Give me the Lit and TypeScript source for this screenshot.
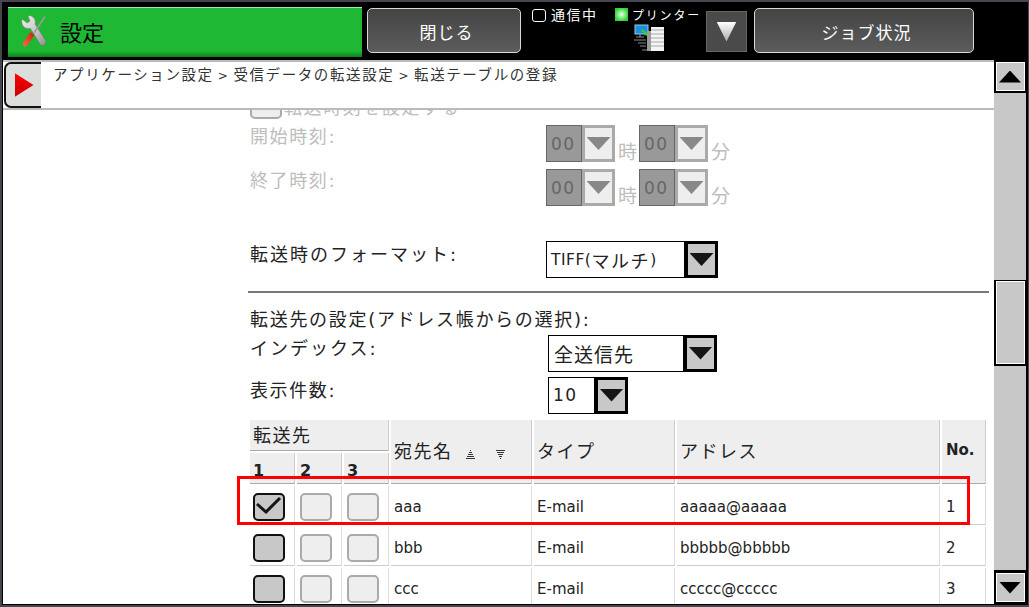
import { LitElement, html, css, svg } from "lit";
import { customElement } from "lit/decorators.js";

const rows = [
  { on: true, name: "aaa", addr: "aaaaa@aaaaa", no: "1" },
  { on: false, name: "bbb", addr: "bbbbb@bbbbb", no: "2" },
  { on: false, name: "ccc", addr: "ccccc@ccccc", no: "3" },
];

const tools = svg`<svg class="tools" width="28" height="34" viewBox="0 0 28 34">
  <defs>
    <linearGradient id="metal" x1="0" y1="0" x2="1" y2="1"><stop offset="0" stop-color="#f2f2f2"/><stop offset="0.6" stop-color="#c4c4c4"/><stop offset="1" stop-color="#8f8f8f"/></linearGradient>
    <linearGradient id="redh" x1="0" y1="1" x2="1" y2="0"><stop offset="0" stop-color="#ff6a4a"/><stop offset="1" stop-color="#c81c10"/></linearGradient>
  </defs>
  <path d="M2 5 L7 9 L10 7 L8 2 C11 1 14 3 15 6 C15.600 8 15.400 9 15 10 L24.500 25 C26 27 26 29 24.500 30.500 C23 31.500 21 31.500 20 30 L10.500 14.500 C7 15 4 14 2.500 11 C1.800 9 1.600 7 2 5 Z" fill="url(#metal)" stroke="#777" stroke-width="0.5"/>
  <path d="M25 2.500 L14 19" stroke="#9a9a9a" stroke-width="1.600" fill="none"/>
  <path d="M10.500 18 L14.500 21 L7.500 31 C6.500 32.500 5 33 3.800 32 C2.800 31 2.800 29.500 3.500 28 Z" fill="url(#redh)"/>
</svg>`;

const printer = svg`<svg width="34" height="27" viewBox="0 0 34 27">
  <rect x="3" y="1" width="13" height="9" fill="#1d8fe0" stroke="#9bc8ea" stroke-width="1"/>
  <path d="M4 13 H12 M8 10 V13 M2 16 H14 M6 19 H14 M8 22 H14 M10 26 H16" stroke="#8a8a8a" stroke-width="1.200" fill="none"/>
  <path d="M10 5 L16 9 L17 5 L17 12 L11 11 L14 10 L9 7 Z" fill="#2fd03a"/>
  <rect x="15" y="7" width="5" height="20" fill="#9a9a9a"/>
  <rect x="19" y="3" width="13" height="24" fill="#f4f4f4"/>
  <path d="M19 6 H32 M19 10 H32 M19 14 H32 M19 18 H32 M19 22 H32" stroke="#a8a8a8" stroke-width="1"/>
</svg>`;

const sortUp = svg`<svg width="9" height="9" viewBox="0 0 9 9" shape-rendering="crispEdges"><path d="M4 0.500 H5 M3 2.500 H6 M2 4.500 H7 M1 6.500 H8 M0 8.500 H9" stroke="#333" stroke-width="1"/></svg>`;
const sortDown = svg`<svg width="9" height="9" viewBox="0 0 9 9" shape-rendering="crispEdges"><path d="M0 0.500 H9 M1 2.500 H8 M2 4.500 H7 M3 6.500 H6 M4 8.500 H5" stroke="#333" stroke-width="1"/></svg>`;

@customElement("app-root")
export class AppRoot extends LitElement {
  static styles = css`
    :host {
      display: block;
      width: 1029px;
      height: 607px;
      box-sizing: border-box;
      background: #000;
      border: solid #45464f;
      border-width: 2px 1px 2px 2px;
      overflow: hidden;
      font-family: "DejaVu Sans", "Noto Sans CJK JP", sans-serif;
      color: #222;
    }
    .top { display: flex; align-items: flex-start; height: 58px; color: #fff; }
    .title {
      margin: 5px 0 0 6px; width: 354px; height: 50px; box-sizing: border-box;
      display: flex; align-items: center; padding: 0 0 4px 12px; gap: 12px;
      border-top: 1px solid #a6e6ae;
      background: linear-gradient(#1fb834 0, #1fb834 88%, #0b7f1c 100%);
      color: #000; font-size: 22px;
    }
    .tools { flex: none; }
    .btn {
      height: 45px; margin-top: 6px; box-sizing: border-box;
      border: 1.5px solid #d8d8d8; border-radius: 5px;
      background: linear-gradient(#444, #5c5c5c);
      display: flex; align-items: center; justify-content: center;
      font-size: 17px; letter-spacing: 1px; padding: 2px 0 0 5px;
    }
    .close { width: 154px; margin-left: 5px; }
    .job { width: 220px; margin-left: 7px; }
    .comm { width: 83px; margin: 4px 0 0 11px; height: 18px; display: flex; align-items: center; gap: 5px; font-size: 14px; line-height: 18px; letter-spacing: 1.500px; }
    .box { width: 14px; height: 13px; box-sizing: border-box; border: 1px solid #fff; border-radius: 3px; flex: none; }
    .prn { width: 91px; margin-top: 4px; font-size: 12px; }
    .prn-row { display: flex; align-items: center; gap: 4px; letter-spacing: 1.800px; height: 16px; }
    .led { width: 13px; height: 13px; flex: none; background: radial-gradient(#e8ffe8, #2bd531 75%); }
    .prn-ico { margin: 2px 0 0 17px; height: 27px; }
    .menu {
      width: 41px; height: 41px; margin-top: 9px; box-sizing: border-box;
      background: #4a4a4a; border: 1px solid #666;
      display: flex; align-items: center; justify-content: center;
    }
    .white-tri { width: 20px; height: 20px; background: linear-gradient(#fff, #aaa); clip-path: polygon(0 0, 100% 0, 50% 100%); }

    .body { display: flex; height: 545px; }
    .main { margin-left: 1px; width: 991px; background: #fff; display: flex; flex-direction: column; overflow: hidden; height: 544px; }
    .crumb {
      height: 50px; flex: none; box-sizing: border-box; display: flex; background: #fff;
      border-top: 2px solid #bbb; border-bottom: 2px solid #bbb; position: relative; z-index: 1;
    }
    .tab {
      width: 37px; margin-left: 1px; box-sizing: border-box; height: 46px;
      background: #dcdedc; border: 2px solid #111; border-right: none; border-radius: 7px 0 0 7px;
      display: flex; align-items: center; justify-content: center; padding-left: 1px;
    }
    .red-tri { width: 19px; height: 24px; background: linear-gradient(#ff0000, #c80000); clip-path: polygon(0 0, 100% 50%, 0 100%); }
    .path { margin-left: 12px; padding-top: 3px; font-size: 14.500px; letter-spacing: 1.600px; line-height: 20px; color: #333; }
    .path i { font-style: normal; font-size: 12px; margin: 0 4px; }

    .content { flex: 1; min-height: 0; padding-left: 247px; }
    .row { display: flex; align-items: flex-start; font-size: 18px; letter-spacing: 1.600px; }
    .lbl { width: 296px; flex: none; line-height: 24px; }
    .lbl.wide { width: 298px; padding-top: 2px; box-sizing: border-box; }
    .lbl.low { padding-top: 2px; }
    .lbl.kana { letter-spacing: 2px; }
    .dim { color: #bdbdbd; }
    .clip { margin-top: -18px; height: 26px; align-items: center; padding-top: 1px; box-sizing: border-box; }
    .cb-dim { width: 32px; height: 28px; box-sizing: border-box; border: 2px solid #aaa; border-radius: 5px; background: #eee; flex: none; }
    .clip .cb-dim { height: 26px; margin-right: 2px; }
    .t1 { margin-top: 7px; }
    .t2 { margin-top: 7px; }
    .unit { width: 24px; flex: none; align-self: flex-end; padding-left: 3px; box-sizing: border-box; text-align: left; line-height: 20px; letter-spacing: 0; font-size: 19px; }
    .sel { display: flex; height: 37px; box-sizing: border-box; flex: none; }
    .val {
      box-sizing: border-box; border: 1px solid #000; background: #fff; color: #222;
      display: flex; align-items: center; padding-left: 4px; font-size: 15.500px; letter-spacing: 0.500px;
    }
    .val span { font-size: 18px; letter-spacing: 1.600px; }
    .val.num { letter-spacing: 1.500px; font-size: 17px; padding-left: 4px; }
    .val.big { font-size: 19px; letter-spacing: 1px; padding-left: 5px; }
    .arr {
      width: 33px; box-sizing: border-box; border: 3px solid #000; background: #c8c8c8;
      display: flex; align-items: center; justify-content: center;
    }
    .tri { width: 24px; height: 13px; background: #151515; clip-path: polygon(0 0, 100% 0, 50% 100%); }
    .sel.off .val { width: 36px; background: #999; border-color: #666; color: #666; padding-left: 4px; }
    .sel.off .arr { width: 33px; background: #eee; border-color: #aaa; }
    .sel.off .tri { background: #888; }
    .f1 { margin-top: 35px; }
    hr { margin: 13px 0 0 -2px; width: 741px; border: none; height: 1.500px; background: #777; }
    .head { margin-top: 15px; line-height: 24px; font-size: 18px; letter-spacing: 1.700px; }
    .f2 { margin-top: 3px; }
    .f3 { margin-top: 5px; }

    .wrap { position: relative; margin-top: 6px; width: 736px; }
    .grid {
      display: grid;
      grid-template-columns: 45px 45px 45px 141px 141px 263px 44px;
      grid-template-rows: 31px 31px;
      grid-auto-rows: 39px;
      gap: 2px;
      font-size: 15px;
    }
    .th {
      background: #eee; box-sizing: border-box; border-bottom: 1.500px solid #aaa; border-right: 1px solid #ccc;
      display: flex; align-items: center; padding-left: 3px; font-size: 18px; letter-spacing: 1.500px;
    }
    .span3 { grid-column: span 3; padding-bottom: 1px; }
    .tall { grid-row: span 2; padding-bottom: 2px; }
    .num-h { font-size: 16px; font-weight: 700; letter-spacing: 0; padding: 8px 0 0 3px; align-items: flex-start; }
    .no-h { font-size: 15px; font-weight: 700; letter-spacing: 0; padding-left: 4px; }
    .sort { display: flex; gap: 21px; margin-left: 13px; padding-top: 8px; }
    .td {
      box-sizing: border-box; border-bottom: 1.500px solid #ccc; border-right: 1px solid #ddd;
      display: flex; align-items: center; padding-left: 3px; padding-top: 4px;
    }
    .td.c { padding: 7px 0 0 3px; align-items: flex-start; }
    .cb {
      width: 32px; height: 28px; box-sizing: border-box; border: 2px solid #111; border-radius: 5px; background: #c8c8c8;
      display: flex; align-items: center; justify-content: center; flex: none;
    }
    .mark {
      position: absolute; left: -13px; top: 56px; width: 733px; height: 49px; box-sizing: border-box;
      border: 3px solid #f00; pointer-events: none;
    }

    .bar { width: 32px; flex: none; display: flex; flex-direction: column; align-items: center; }
    .sb-btn {
      width: 29px; height: 29px; box-sizing: border-box; border: 1px solid #fff; background: #c8c8c8;
      display: flex; align-items: center; justify-content: center;
    }
    .up { margin-top: 2px; }
    .sb-up { width: 22px; height: 12px; background: #000; clip-path: polygon(50% 0, 100% 100%, 0 100%); }
    .sb-down { width: 22px; height: 12px; background: #000; clip-path: polygon(0 0, 100% 0, 50% 100%); }
    .track { width: 32px; background: #c8c8c8; flex: none; }
    .t-a { height: 187px; margin-top: 2px; }
    .t-b { height: 204px; margin-top: 2px; }
    .thumb { width: 29px; height: 83px; margin-top: 1px; flex: none; box-sizing: border-box; border: 1px solid #fff; background: #c8c8c8; }
    .down { margin-top: 3px; }
  `;

  private sel(value: unknown, valW: number, off = false, kind = "") {
    return html`<div class="sel ${off ? "off" : ""}">
      <div class="val ${kind}" style=${off ? "" : `width:${valW}px`}>${value}</div>
      <div class="arr"><div class="tri"></div></div>
    </div>`;
  }

  private timeRow(label: string, cls: string) {
    return html`<div class="row dim ${cls}">
      <div class="lbl">${label}</div>
      ${this.sel("00", 0, true, "num")}<div class="unit">時</div>
      ${this.sel("00", 0, true, "num")}<div class="unit">分</div>
    </div>`;
  }

  render() {
    return html`
      <div class="top">
        <div class="title">${tools}<span>設定</span></div>
        <div class="btn close">閉じる</div>
        <div class="comm"><div class="box"></div>通信中</div>
        <div class="prn">
          <div class="prn-row"><div class="led"></div>プリンター</div>
          <div class="prn-ico">${printer}</div>
        </div>
        <div class="menu"><div class="white-tri"></div></div>
        <div class="btn job">ジョブ状況</div>
      </div>
      <div class="body">
        <div class="main">
          <div class="crumb">
            <div class="tab"><div class="red-tri"></div></div>
            <div class="path">アプリケーション設定<i>&gt;</i>受信データの転送設定<i>&gt;</i>転送テーブルの登録</div>
          </div>
          <div class="content">
            <div class="row dim clip"><div class="cb-dim"></div>転送時刻を設定する</div>
            ${this.timeRow("開始時刻:", "t1")}
            ${this.timeRow("終了時刻:", "t2")}
            <div class="row f1">
              <div class="lbl low kana">転送時のフォーマット:</div>
              ${this.sel(html`TIFF(<span>マルチ</span>)`, 139)}
            </div>
            <hr />
            <div class="head">転送先の設定(アドレス帳からの選択):</div>
            <div class="row f2">
              <div class="lbl wide kana">インデックス:</div>
              ${this.sel("全送信先", 136, false, "big")}
            </div>
            <div class="row f3">
              <div class="lbl wide">表示件数:</div>
              ${this.sel("10", 47, false, "num")}
            </div>
            <div class="wrap">
              <div class="grid">
                <div class="th span3">転送先</div>
                <div class="th tall">宛先名<div class="sort">${sortUp}${sortDown}</div></div>
                <div class="th tall">タイプ</div>
                <div class="th tall">アドレス</div>
                <div class="th tall no-h">No.</div>
                <div class="th num-h">1</div>
                <div class="th num-h">2</div>
                <div class="th num-h">3</div>
                ${rows.map(
                  (r) => html`
                    <div class="td c">
                      <div class="cb">
                        ${r.on
                          ? svg`<svg width="28" height="24" viewBox="0 0 28 24"><path d="M2 9 L11 17 L25 3" stroke="#151515" stroke-width="3" fill="none"/></svg>`
                          : ""}
                      </div>
                    </div>
                    <div class="td c"><div class="cb-dim"></div></div>
                    <div class="td c"><div class="cb-dim"></div></div>
                    <div class="td">${r.name}</div>
                    <div class="td">E-mail</div>
                    <div class="td">${r.addr}</div>
                    <div class="td" style="padding-left:4px">${r.no}</div>
                  `
                )}
              </div>
              <div class="mark"></div>
            </div>
          </div>
        </div>
        <div class="bar">
          <div class="sb-btn up"><div class="sb-up"></div></div>
          <div class="track t-a"></div>
          <div class="thumb"></div>
          <div class="track t-b"></div>
          <div class="sb-btn down"><div class="sb-down"></div></div>
        </div>
      </div>
    `;
  }
}
